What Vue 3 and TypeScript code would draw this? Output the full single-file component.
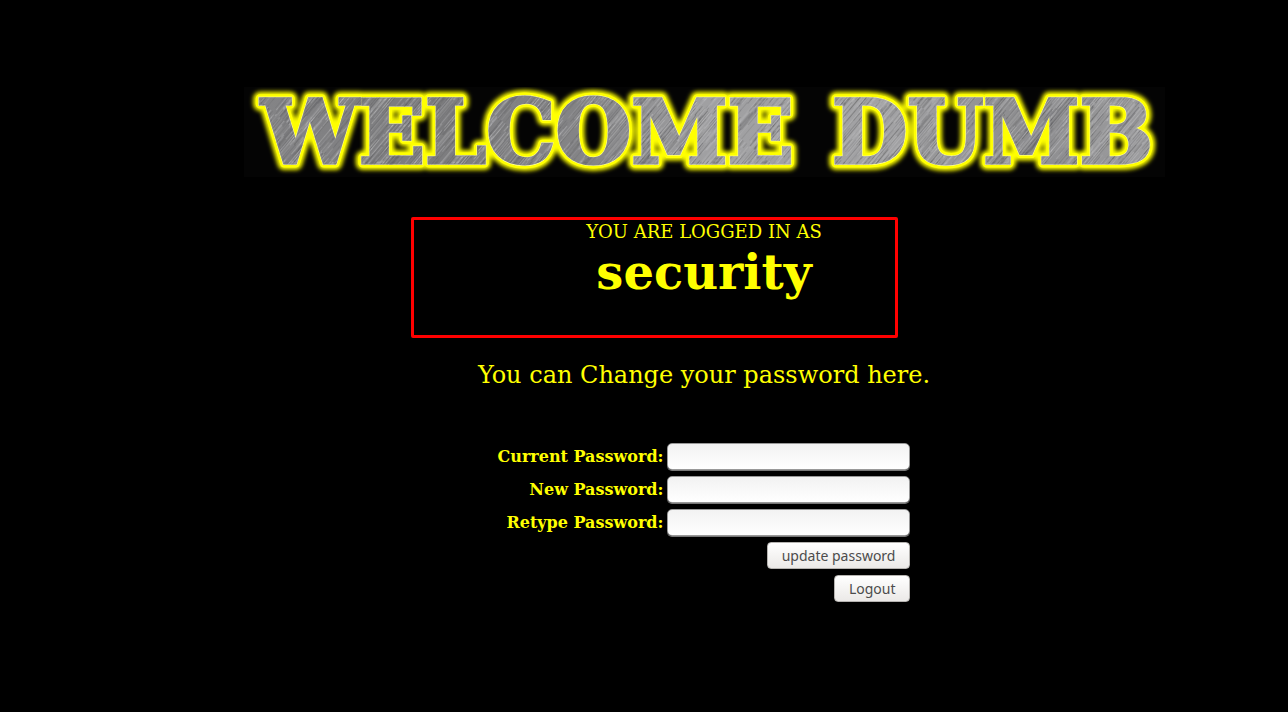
<script setup lang="ts">
import { ref } from 'vue'

interface Field {
  id: string
  label: string
  autocomplete: string
}

interface Scratch {
  x: number
  y: number
  length: number
  tone: string
  opacity: number
}

const fields: Field[] = [
  { id: 'current', label: 'Current Password:', autocomplete: 'current-password' },
  { id: 'new', label: 'New Password:', autocomplete: 'new-password' },
  { id: 'retype', label: 'Retype Password:', autocomplete: 'new-password' },
]

const values = ref<Record<string, string>>({ current: '', new: '', retype: '' })

// Seeded scratches give the brushed metal the same grain on every load.
function makeScratches(count: number): Scratch[] {
  let seed = 7
  const next = () => {
    seed = (seed * 16807) % 2147483647
    return seed / 2147483647
  }
  return Array.from({ length: count }, () => ({
    x: Math.round(next() * 160) - 20,
    y: Math.round(next() * 96),
    length: 14 + Math.round(next() * 40),
    tone: next() > 0.5 ? '#bcbcbe' : '#626264',
    opacity: 0.15 + next() * 0.25,
  }))
}

const scratches = makeScratches(420)
</script>

<template>
  <main class="page">
    <svg class="banner" viewBox="0 0 921 90" role="img" aria-label="Welcome Dumb">
      <defs>
        <linearGradient id="steel" x1="0" y1="0" x2="921" y2="0" gradientUnits="userSpaceOnUse">
          <stop offset="0" stop-color="#858587" />
          <stop offset="0.2" stop-color="#7c7c7e" />
          <stop offset="0.38" stop-color="#858587" />
          <stop offset="0.5" stop-color="#a0a0a2" />
          <stop offset="0.7" stop-color="#a2a2a4" />
          <stop offset="0.85" stop-color="#8c8c8e" />
          <stop offset="1" stop-color="#a0a0a2" />
        </linearGradient>
        <pattern id="brushed" width="140" height="96" patternUnits="userSpaceOnUse" patternTransform="rotate(-50)">
          <rect
            v-for="(s, i) in scratches"
            :key="i"
            :x="s.x"
            :y="s.y"
            :width="s.length"
            height="1"
            :fill="s.tone"
            :opacity="s.opacity"
          />
        </pattern>
        <filter id="halo" x="-20" y="-20" width="961" height="130" filterUnits="userSpaceOnUse">
          <feGaussianBlur stdDeviation="2" />
        </filter>
        <g id="lettering" class="lettering">
          <text x="17" y="76">WELCOME</text>
          <text x="588" y="76">DUMB</text>
        </g>
      </defs>
      <rect width="921" height="90" fill="#040404" />
      <use href="#lettering" class="halo" filter="url(#halo)" />
      <use href="#lettering" class="rim" />
      <use href="#lettering" class="shine" />
      <use href="#lettering" class="steel" />
      <use href="#lettering" class="grain" />
    </svg>

    <section class="account">
      <p class="caption">YOU ARE LOGGED IN AS</p>
      <h1 class="user">security</h1>
      <span class="frame"></span>
    </section>

    <p class="hint">You can Change your password here.</p>

    <form class="form" @submit.prevent>
      <template v-for="f in fields" :key="f.id">
        <label class="label" :for="f.id">{{ f.label }}</label>
        <input
          :id="f.id"
          v-model="values[f.id]"
          class="field"
          type="password"
          :autocomplete="f.autocomplete"
        />
      </template>
      <button class="button" type="submit">update password</button>
      <button class="button" type="button">Logout</button>
    </form>
  </main>
</template>

<style>
body {
  background: #000;
}
</style>

<style scoped>
.page {
  display: flex;
  flex-direction: column;
  align-items: center;
  padding: 87px 0 40px 120px;
  color: #ff0;
  font-family: "DejaVu Serif", serif;
}

.banner {
  display: block;
  width: 100%;
  max-width: 921px;
}

.lettering {
  font-family: "DejaVu Serif", serif;
  font-size: 87px;
  font-weight: 700;
}

.halo {
  fill: #ff0;
  stroke: #ff0;
  stroke-width: 14px;
  stroke-linejoin: round;
}

.rim {
  fill: #ff0;
  stroke: #ff0;
  stroke-width: 9px;
  stroke-linejoin: round;
}

.shine {
  fill: #fff;
  stroke: #ffffa0;
  stroke-width: 4px;
}

.steel {
  fill: url(#steel);
  stroke: url(#steel);
  stroke-width: 3px;
}

.grain {
  fill: url(#brushed);
  stroke: url(#brushed);
  stroke-width: 3px;
}

.account {
  position: relative;
  width: 100%;
  margin-top: 44px;
  text-align: center;
}

.caption {
  margin: 0;
  font-size: 18px;
  line-height: 22px;
}

.user {
  margin: 0;
  font-size: 48px;
  line-height: 58px;
}

.frame {
  position: absolute;
  top: -4px;
  left: 50%;
  box-sizing: border-box;
  width: 487px;
  height: 121px;
  margin-left: -293px;
  border: 3px solid #f00;
  border-radius: 2px;
}

.hint {
  margin: 60px 0 0;
  font-size: 24px;
  line-height: 28px;
}

.form {
  display: grid;
  grid-template-columns: auto 243px;
  column-gap: 4px;
  row-gap: 6px;
  margin-top: 54px;
}

.label {
  font-size: 16px;
  font-weight: 700;
  line-height: 27px;
  text-align: right;
}

.field {
  box-sizing: border-box;
  width: 100%;
  height: 27px;
  padding: 2px 6px;
  border: 1px solid #999;
  border-radius: 5px;
  background: linear-gradient(#f2f2f2, #fff);
  box-shadow: 0 1px 0 #777;
  color: #333;
  font-size: 15px;
}

.button {
  grid-column: 2;
  justify-self: end;
  height: 27px;
  padding: 0 14px;
  border: 1px solid #b5b3b0;
  border-radius: 4px;
  background: linear-gradient(#fff, #ebe9e7);
  color: #4c4c4c;
  font-family: "Noto Sans", sans-serif;
  font-size: 14px;
  line-height: 24px;
}
</style>
